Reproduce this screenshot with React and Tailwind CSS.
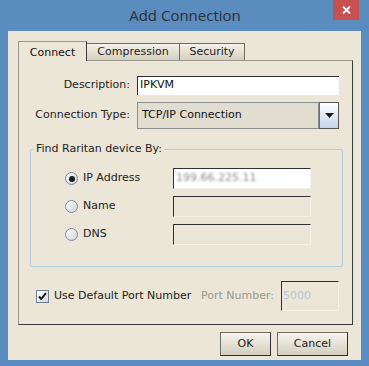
const FONT = "font-['DejaVu_Sans',Verdana,sans-serif]";

const Radio = ({ checked }) => (
  <span className="w-[13px] h-[13px] rounded-full border border-[#7d8c9c] bg-gradient-to-br from-white to-[#c9d3dd] flex items-center justify-center shrink-0">
    {checked && <span className="w-[6px] h-[6px] rounded-full bg-[#1c1c1c]" />}
  </span>
);

const Sunken = ({ className = '', children }) => (
  <div className={`border-t border-l border-t-[#2f2f2f] border-l-[#2f2f2f] border-b border-r border-b-[#f4f1e8] border-r-[#f4f1e8] ${className}`}>
    {children}
  </div>
);

const Button = ({ label, className = '' }) => (
  <button className={`h-[24px] border border-[#6f6d64] border-b-[#2e2e2e] border-r-[#2e2e2e] bg-gradient-to-b from-[#f6f4ee] to-[#d3cebd] text-[11px] text-[#222] ${className}`}>
    {label}
  </button>
);

export default function App() {
  return (
    <div className={`w-[369px] h-[366px] bg-[#5a8cbf] flex flex-col ${FONT}`}>
      {/* title bar */}
      <div className="relative h-[31px] flex items-center justify-center">
        <span className="font-['Open_Sans',sans-serif] text-[15px] text-[#2e2e2e] -mt-[1px] ml-[1px]">Add Connection</span>
        <div className="absolute right-[10px] top-0 w-[26px] h-[20px] bg-[#c75050] flex items-center justify-center">
          <svg width="9" height="8" viewBox="0 0 9 8">
            <path d="M1 0.5 L8 7.5 M8 0.5 L1 7.5" stroke="#fff" strokeWidth="1.8" />
          </svg>
        </div>
      </div>

      {/* client area */}
      <div className="ml-[8px] w-[353px] h-[329px] bg-[#ebe6d7] flex flex-col pl-[10px] pt-[10px]">
        {/* tabs */}
        <div className="flex items-end h-[20px] relative z-10">
          <div className="w-[69px] h-[20px] bg-[#ebe6d7] border-t border-l border-[#9a978c] border-r border-r-[#3a3a3a] flex justify-center pt-[3px] text-[11px] text-[#111]">
            Connect
          </div>
          <div className="w-[93px] h-[17px] mb-[1px] bg-gradient-to-b from-[#f4f2eb] to-[#d5cfbe] border-t border-r border-[#6f6c62] flex items-center justify-center text-[11px] text-[#222]">
            Compression
          </div>
          <div className="w-[65px] h-[17px] mb-[1px] bg-gradient-to-b from-[#f4f2eb] to-[#d5cfbe] border-t border-r border-[#6f6c62] flex items-center justify-center text-[11px] text-[#222]">
            Security
          </div>
        </div>

        {/* tab panel */}
        <div className="-mt-[1px] w-[335px] h-[265px] border-t border-l border-[#9a978c] border-r border-b border-r-[#3a3a3a] border-b-[#3a3a3a] flex flex-col text-[11px] text-[#222]">
          <div className="flex items-center mt-[14px] h-[20px]">
            <span className="w-[111px] text-right mr-[7px]">Description:</span>
            <div className="w-[202px] h-[19px] bg-white border-t border-l border-[#2f2f2f] flex items-center pl-[2px] text-[#111]">IPKVM</div>
          </div>

          <div className="flex items-center mt-[7px]">
            <span className="w-[111px] text-right mr-[7px] whitespace-nowrap">Connection Type:</span>
            <div className="w-[182px] h-[27px] bg-[#e1ddd0] border border-[#8d8d8d] flex items-center pl-[4px] text-[#111]">TCP/IP Connection</div>
            <div className="w-[20px] h-[27px] border border-[#555] border-l-[#6b6b6b] bg-gradient-to-b from-white to-[#c5d5e8] flex items-center justify-center">
              <svg width="9" height="5" viewBox="0 0 9 5"><path d="M0 0 H9 L4.5 5 Z" fill="#1a1a1a" /></svg>
            </div>
          </div>

          {/* group box */}
          <div className="relative ml-[11px] mt-[20px] w-[313px] h-[118px] border border-[#b7ccdb] rounded-[2px]">
            <span className="absolute -top-[8px] left-[3px] px-[2px] bg-[#ebe6d7] leading-[14px]">Find Raritan device By:</span>
            <div className="flex flex-col mt-[18px] gap-[7px]">
              {[
                ['IP Address', true],
                ['Name', false],
                ['DNS', false],
              ].map(([label, checked]) => (
                <div key={label} className="flex items-center h-[21px]">
                  <div className="ml-[34px] w-[108px] flex items-center gap-[5px]">
                    <Radio checked={checked} />
                    <span>{label}</span>
                  </div>
                  <Sunken className={`w-[138px] h-[21px] ${checked ? 'bg-white' : 'bg-[#ebe6d7]'} flex items-center pl-[2px]`}>
                    {checked && <span className="text-[#8d8d8d] blur-[1.2px]">199.66.225.11</span>}
                  </Sunken>
                </div>
              ))}
            </div>
          </div>

          <div className="flex items-center mt-[14px] ml-[17px] mr-[13px]">
            <span className="w-[13px] h-[13px] border border-[#6d7f90] bg-gradient-to-br from-white to-[#cfd8e2] flex items-center justify-center">
              <svg width="9" height="8" viewBox="0 0 9 8">
                <path d="M1 4.5 L3.2 7 L8 1" stroke="#151515" strokeWidth="2" fill="none" />
              </svg>
            </span>
            <span className="ml-[5px] whitespace-nowrap">Use Default Port Number</span>
            <span className="ml-auto text-[#9a9890] whitespace-nowrap">Port Number:</span>
            <Sunken className="ml-[7px] w-[58px] h-[30px] flex items-center pl-[1px]">
              <span className="text-[#b9c6d3]">5000</span>
            </Sunken>
          </div>
        </div>

        {/* buttons */}
        <div className="flex mt-[7px] ml-[202px] gap-[6px]">
          <Button label="OK" className="w-[51px]" />
          <Button label="Cancel" className="w-[71px]" />
        </div>
      </div>
    </div>
  );
}
